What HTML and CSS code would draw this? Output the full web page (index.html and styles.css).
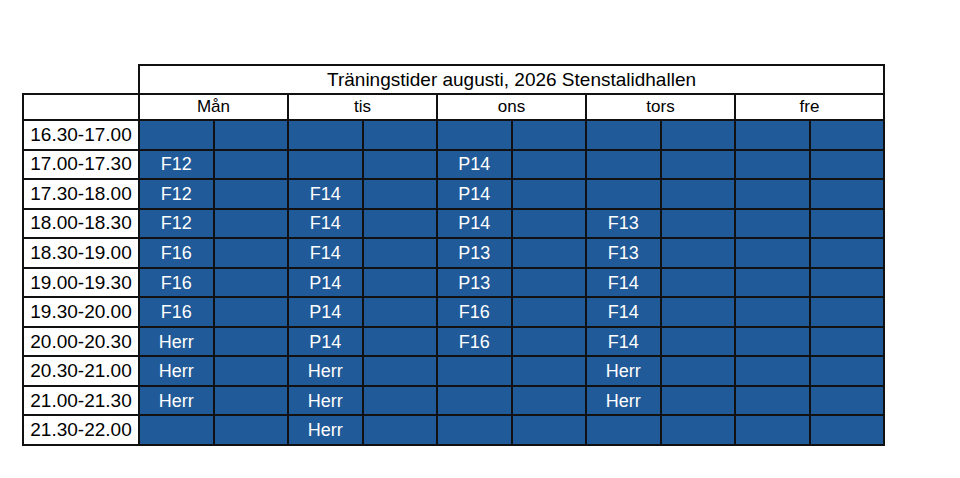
FILE: index.html
```html
<!DOCTYPE html>
<html lang="sv">
<head>
<meta charset="utf-8">
<title>Träningstider augusti, 2026 Stenstalidhallen</title>
<link rel="stylesheet" href="styles.css">
</head>
<body>
<table class="schedule">
  <colgroup>
    <col class="c-time">
    <col class="c-slot"><col class="c-slot"><col class="c-slot"><col class="c-slot"><col class="c-slot">
    <col class="c-slot"><col class="c-slot"><col class="c-slot"><col class="c-slot"><col class="c-slot">
  </colgroup>
  <tr class="r-title">
    <td class="corner"></td>
    <td class="title" colspan="10">Träningstider augusti, 2026 Stenstalidhallen</td>
  </tr>
  <tr class="r-days">
    <td class="blank"></td>
    <td class="day" colspan="2">Mån</td>
    <td class="day" colspan="2">tis</td>
    <td class="day" colspan="2">ons</td>
    <td class="day" colspan="2">tors</td>
    <td class="day" colspan="2">fre</td>
  </tr>
  <tr class="r-slot"><td class="time">16.30-17.00</td><td class="s"></td><td class="s"></td><td class="s"></td><td class="s"></td><td class="s"></td><td class="s"></td><td class="s"></td><td class="s"></td><td class="s"></td><td class="s"></td></tr>
  <tr class="r-slot"><td class="time">17.00-17.30</td><td class="s">F12</td><td class="s"></td><td class="s"></td><td class="s"></td><td class="s">P14</td><td class="s"></td><td class="s"></td><td class="s"></td><td class="s"></td><td class="s"></td></tr>
  <tr class="r-slot"><td class="time">17.30-18.00</td><td class="s">F12</td><td class="s"></td><td class="s">F14</td><td class="s"></td><td class="s">P14</td><td class="s"></td><td class="s"></td><td class="s"></td><td class="s"></td><td class="s"></td></tr>
  <tr class="r-slot"><td class="time">18.00-18.30</td><td class="s">F12</td><td class="s"></td><td class="s">F14</td><td class="s"></td><td class="s">P14</td><td class="s"></td><td class="s">F13</td><td class="s"></td><td class="s"></td><td class="s"></td></tr>
  <tr class="r-slot"><td class="time">18.30-19.00</td><td class="s">F16</td><td class="s"></td><td class="s">F14</td><td class="s"></td><td class="s">P13</td><td class="s"></td><td class="s">F13</td><td class="s"></td><td class="s"></td><td class="s"></td></tr>
  <tr class="r-slot"><td class="time">19.00-19.30</td><td class="s">F16</td><td class="s"></td><td class="s">P14</td><td class="s"></td><td class="s">P13</td><td class="s"></td><td class="s">F14</td><td class="s"></td><td class="s"></td><td class="s"></td></tr>
  <tr class="r-slot"><td class="time">19.30-20.00</td><td class="s">F16</td><td class="s"></td><td class="s">P14</td><td class="s"></td><td class="s">F16</td><td class="s"></td><td class="s">F14</td><td class="s"></td><td class="s"></td><td class="s"></td></tr>
  <tr class="r-slot"><td class="time">20.00-20.30</td><td class="s">Herr</td><td class="s"></td><td class="s">P14</td><td class="s"></td><td class="s">F16</td><td class="s"></td><td class="s">F14</td><td class="s"></td><td class="s"></td><td class="s"></td></tr>
  <tr class="r-slot"><td class="time">20.30-21.00</td><td class="s">Herr</td><td class="s"></td><td class="s">Herr</td><td class="s"></td><td class="s"></td><td class="s"></td><td class="s">Herr</td><td class="s"></td><td class="s"></td><td class="s"></td></tr>
  <tr class="r-slot"><td class="time">21.00-21.30</td><td class="s">Herr</td><td class="s"></td><td class="s">Herr</td><td class="s"></td><td class="s"></td><td class="s"></td><td class="s">Herr</td><td class="s"></td><td class="s"></td><td class="s"></td></tr>
  <tr class="r-slot"><td class="time">21.30-22.00</td><td class="s"></td><td class="s"></td><td class="s">Herr</td><td class="s"></td><td class="s"></td><td class="s"></td><td class="s"></td><td class="s"></td><td class="s"></td><td class="s"></td></tr>
</table>
</body>
</html>
```
FILE: styles.css
```css
html, body {
  margin: 0;
  padding: 0;
  background: #ffffff;
}

body {
  padding: 64px 0 0 22px;
  font-family: "Liberation Sans", Arial, sans-serif;
  color: #000;
}

.schedule {
  border-collapse: collapse;
  table-layout: fixed;
  width: 861px;
}

.c-time { width: 116px; }
.c-slot { width: 74.5px; }

.schedule td {
  border: 2px solid #111;
  padding: 0;
  text-align: center;
  vertical-align: middle;
  white-space: nowrap;
  overflow: hidden;
}

.schedule td.corner {
  border: none;
}

.r-title { height: 29px; }
.r-days { height: 26px; }
.r-slot { height: 29.55px; }

.title {
  font-size: 19px;
  line-height: 20px;
  padding-top: 1px;
}

.day {
  font-size: 17px;
  line-height: 18px;
}

.time {
  font-size: 19px;
  line-height: 20px;
  background: #fff;
}

.s {
  background: #215a98;
  color: #fff;
  font-size: 18px;
  line-height: 20px;
}
```
